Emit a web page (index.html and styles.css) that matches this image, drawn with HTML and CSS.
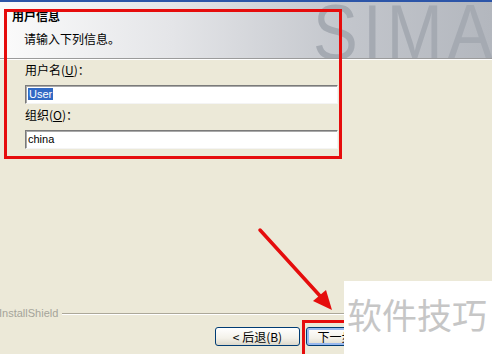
FILE: index.html
```html
<!DOCTYPE html>
<html lang="zh-CN">
<head>
    <meta charset="UTF-8">
    <title>用户信息</title>
    <link rel="stylesheet" href="styles.css">
</head>
<body>
    <div class="window">
        <div class="topbar"></div>
        <div class="header">
            <span class="logo">SIMA</span>
            <h1 class="title">用户信息</h1>
            <p class="subtitle">请输入下列信息。</p>
        </div>

        <div class="content">
            <label class="label">用户名(<u>U</u>)：</label>
            <div class="input"><span class="selected">User</span></div>
            <label class="label second">组织(<u>O</u>)：</label>
            <div class="input">china</div>
        </div>

        <div class="footer">
            <div class="brand">
                <span>InstallShield</span>
                <div class="rule"></div>
            </div>
            <div class="buttons">
                <button class="btn">&lt; 后退(B)</button>
                <button class="btn next">下一步(<u>N</u>) &gt;</button>
            </div>
        </div>

        <!-- annotations -->
        <div class="mark mark-form"></div>
        <div class="mark mark-next"></div>
        <svg class="arrow" width="492" height="354" viewBox="0 0 492 354">
            <line x1="260" y1="230" x2="321" y2="297" stroke="#e50d0d" stroke-width="3.5" stroke-linecap="round"/>
            <polygon points="326,290 313,301 332,310" fill="#e50d0d"/>
        </svg>
        <div class="stamp">软件技巧</div>
    </div>
</body>
</html>
```

FILE: styles.css
```css
body {
    margin: 0;
    padding: 0;
    background-color: #ece9d8;
    font-family: "Noto Sans CJK SC", "Liberation Sans", sans-serif;
    font-size: 12px;
    color: #000;
}

.window {
    position: relative;
    width: 492px;
    height: 354px;
    overflow: hidden;
    display: flex;
    flex-direction: column;
    background-color: #ece9d8;
}

.topbar {
    height: 2px;
    background-color: #2c55a8;
}

.header {
    position: relative;
    height: 57px;
    padding: 7px 0 0 12px;
    box-sizing: border-box;
    overflow: hidden;
    background: linear-gradient(to right, #fbfbfb 0%, #e4e5e8 35%, #c3c6cc 70%, #b3b7be 100%);
    border-bottom: 1px solid #9b9b9b;
    box-shadow: 0 1px 0 #ffffff;
}

.logo {
    position: absolute;
    left: 313px;
    top: -9px;
    font-family: "Liberation Sans", sans-serif;
    font-size: 78px;
    line-height: 78px;
    letter-spacing: 6px;
    white-space: nowrap;
    color: #a5aab2;
    transform: scaleX(0.86);
    transform-origin: left top;
}

.title {
    position: relative;
    margin: 0;
    font-size: 12px;
    line-height: 14px;
    font-weight: bold;
}

.subtitle {
    position: relative;
    margin: 9px 0 0 12px;
    line-height: 14px;
}

.content {
    padding: 4px 0 0 25px;
}

.label {
    display: block;
    line-height: 14px;
}

.label.second {
    margin-top: 4px;
}

.input {
    width: 313px;
    height: 19px;
    margin-top: 8px;
    box-sizing: border-box;
    padding: 1px 2px;
    background-color: #fff;
    border-top: 1px solid #7a7a7a;
    border-left: 1px solid #7a7a7a;
    border-right: 1px solid #f4f4f4;
    border-bottom: 1px solid #f4f4f4;
    box-shadow: inset 1px 1px 0 #a9a9a9;
    font-family: "Liberation Sans", sans-serif;
    font-size: 11px;
    line-height: 15px;
}

.selected {
    background-color: #316ac5;
    color: #fff;
    padding: 0 1px;
}

.footer {
    margin-top: auto;
    padding-bottom: 8px;
}

.brand {
    display: flex;
    align-items: center;
    height: 14px;
    color: #a5a49a;
    font-family: "Liberation Sans", sans-serif;
    font-size: 11px;
}

.brand span {
    margin-left: -1px;
}

.rule {
    flex: 1;
    height: 1px;
    margin-left: 4px;
    background-color: #aca899;
    box-shadow: 0 1px 0 #fff;
}

.buttons {
    display: flex;
    gap: 6px;
    margin-top: 7px;
    padding-left: 215px;
}

.btn {
    width: 85px;
    height: 19px;
    padding: 0;
    border: 1px solid #003c74;
    border-radius: 3px;
    background: linear-gradient(#ffffff, #f3f1e9 60%, #dcd8cb);
    font-family: "Noto Sans CJK SC", "Liberation Sans", sans-serif;
    font-size: 12px;
    line-height: 15px;
    color: #000;
}

.btn.next {
    box-shadow: inset 0 0 0 2px #98b8ee;
}

.mark {
    position: absolute;
    border: 3px solid #e60c0c;
    box-sizing: border-box;
}

.mark-form {
    left: 4px;
    top: 9px;
    width: 338px;
    height: 150px;
}

.mark-next {
    left: 302px;
    top: 320px;
    width: 80px;
    height: 50px;
}

.arrow {
    position: absolute;
    left: 0;
    top: 0;
}

.stamp {
    position: absolute;
    left: 344px;
    top: 281px;
    width: 148px;
    height: 73px;
    box-sizing: border-box;
    padding: 13px 0 0 3px;
    background-color: #fff;
    color: #c6c6c6;
    font-size: 35px;
    line-height: 40px;
    letter-spacing: 0;
}
```
